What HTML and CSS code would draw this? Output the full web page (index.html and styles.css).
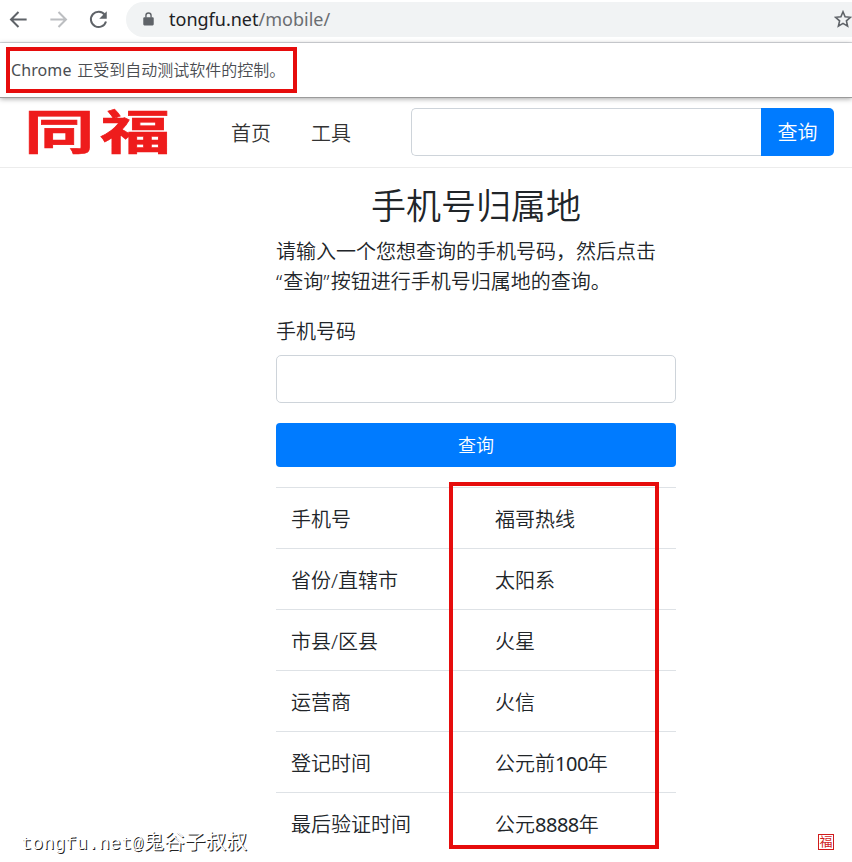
FILE: index.html
```html
<!DOCTYPE html>
<html lang="zh-CN">
  <head>
    <meta charset="UTF-8" />
    <meta name="viewport" content="width=device-width, initial-scale=1.0" />
    <title>手机号归属地</title>
    <link rel="stylesheet" href="styles.css">
  </head>
  <body>
    <div class="toolbar">
      <svg class="icon" viewBox="0 0 24 24"><path d="M20.5 12H4.8M12 4.2L4.2 12l7.8 7.8" /></svg>
      <svg class="icon off" viewBox="0 0 24 24"><path d="M3.5 12h15.7M12 4.2l7.8 7.8-7.8 7.8" /></svg>
      <svg class="icon" viewBox="0 0 24 24"><path d="M18.6 7.2A8 8 0 1 0 19.8 14" /><path class="fill" d="M20.6 3.4v7.8h-7.8z" /></svg>
      <div class="address">
        <svg class="lock" viewBox="0 0 12 15"><path d="M1.5 5.500h9a1.200 1.200 0 0 1 1.200 1.200v6.600a1.200 1.200 0 0 1-1.200 1.200h-9A1.200 1.200 0 0 1 .3 13.300V6.700A1.200 1.200 0 0 1 1.500 5.500z" /><path class="shackle" d="M3.200 6V3.800a2.800 2.800 0 0 1 5.600 0V6" /></svg>
        <span class="url">tongfu.net<span>/mobile/</span></span>
        <svg class="star" viewBox="0 0 18 18"><path d="M9 1.800l2.100 5 5.300.5-4 3.600 1.200 5.300L9 13.400l-4.600 2.800 1.200-5.300-4-3.600 5.300-.5z" /></svg>
      </div>
    </div>

    <div class="infobar">
      <p><span class="chrome">Chrome</span> 正受到自动测试软件的控制。</p>
      <div class="mark mark_info"></div>
    </div>

    <div class="navbar">
      <div class="logo"><span>同</span><span>福</span></div>
      <div class="links">
        <a>首页</a>
        <a>工具</a>
      </div>
      <div class="search">
        <input type="text" />
        <button>查询</button>
      </div>
    </div>

    <div class="container">
      <h1>手机号归属地</h1>
      <p class="intro">请输入一个您想查询的手机号码，然后点击<br /><span class="quote">“</span>查询<span class="quote">”</span>按钮进行手机号归属地的查询。</p>
      <label for="mobile">手机号码</label>
      <input type="text" id="mobile" />
      <button class="submit">查询</button>
      <div class="result">
        <table>
          <tr><td>手机号</td><td>福哥热线</td></tr>
          <tr><td>省份/直辖市</td><td>太阳系</td></tr>
          <tr><td>市县/区县</td><td>火星</td></tr>
          <tr><td>运营商</td><td>火信</td></tr>
          <tr><td>登记时间</td><td>公元前<span class="num">100</span>年</td></tr>
          <tr><td>最后验证时间</td><td>公元<span class="num">8888</span>年</td></tr>
        </table>
        <div class="mark mark_result"></div>
      </div>
    </div>

    <div class="watermark"><span>tongfu.net@</span>鬼谷子叔叔</div>
    <div class="stamp">福</div>
  </body>
</html>
```

FILE: styles.css
```css
* {
  padding: 0;
  margin: 0;
  box-sizing: border-box;
}

body {
  position: relative;
  width: 100%;
  height: 862px;
  overflow: hidden;
  background-color: #fff;
  color: #212529;
  font-family: "Noto Sans", "Noto Sans CJK SC", sans-serif;
  font-size: 20px;
  font-weight: 350;
  line-height: 30px;
}
input,
button {
  font-family: inherit;
  font-weight: inherit;
  outline: none;
}

/* browser bar */
.toolbar {
  display: flex;
  align-items: center;
  height: 43px;
  padding: 0 0 4px 7px;
  border-bottom: 1px solid #dadce0;
}
.icon {
  flex: none;
  width: 23px;
  height: 23px;
  margin-right: 17px;
  fill: none;
  stroke: #5f6368;
  stroke-width: 2.1;
}
.off {
  stroke: #bcbec1;
}
.icon .fill {
  fill: #5f6368;
  stroke: none;
}
.address {
  display: flex;
  align-items: center;
  flex: none;
  width: 760px;
  height: 35px;
  margin-left: -1px;
  padding-left: 17px;
  border-radius: 18px;
  background-color: #f1f3f4;
}
.lock {
  width: 11px;
  height: 14px;
  fill: #5f6368;
}
.lock .shackle {
  fill: none;
  stroke: #5f6368;
  stroke-width: 1.5;
}
.url {
  width: 665px;
  margin-left: 15px;
  color: #202124;
  font-size: 18px;
  font-weight: 400;
}
.url span {
  color: #6a6d71;
}
.star {
  width: 18px;
  height: 18px;
  fill: none;
  stroke: #5f6368;
  stroke-width: 1.6;
}

.infobar {
  position: relative;
  z-index: 1;
  height: 55px;
  padding: 12px 11px;
  border-bottom: 1px solid #9b9b9b;
  background-color: #fff;
  box-shadow: 0 1px 5px rgb(0, 0, 0, 0.35);
  color: #4a4d51;
  font-size: 16px;
}
.chrome {
  display: inline-block;
  width: 62px;
  font-weight: 400;
  letter-spacing: .1px;
}

/* red frames over the page */
.mark {
  position: absolute;
  border: 4px solid #e60c0c;
}
.mark_info {
  top: 4px;
  left: 6px;
  width: 291px;
  height: 46px;
}
.mark_result {
  top: -5px;
  left: 173px;
  width: 210px;
  height: 367px;
}

.navbar {
  display: flex;
  align-items: center;
  height: 70px;
  padding: 0 18px 2px 24px;
  border-bottom: 1px solid #ececec;
}
.logo {
  display: flex;
  width: 207px;
  padding-bottom: 2px;
  color: #ee1c1c;
  font-size: 47px;
  font-weight: 700;
  line-height: 48px;
  -webkit-text-stroke: .6px #ee1c1c;
}
.logo span {
  width: 47px;
  margin-right: 29px;
  transform: scaleX(1.5);
  transform-origin: 0 50%;
}
.links {
  display: flex;
  gap: 40px;
  width: 180px;
  padding-top: 4px;
  color: #333;
}
.search {
  display: flex;
  flex: 1;
}
.search input {
  flex: 1;
  min-width: 0;
  height: 48px;
  border: 1px solid #ced4da;
  border-right: none;
  border-radius: 5px 0 0 5px;
}
.search button {
  width: 73px;
  height: 48px;
  border: none;
  border-radius: 0 5px 5px 0;
  background-color: #007bff;
  color: #fff;
  font-size: 20px;
}

.container {
  width: 400px;
  margin: 17px 0 0 276px;
}
.container h1 {
  margin-bottom: 10px;
  font-size: 35px;
  font-weight: 350;
  line-height: 42px;
  text-align: center;
}
.intro {
  margin-bottom: 20px;
  white-space: nowrap;
}
.quote {
  letter-spacing: 1.1px;
}
.container label {
  display: block;
  margin-bottom: 8px;
}
.container input {
  display: block;
  width: 100%;
  height: 48px;
  margin-bottom: 20px;
  border: 1px solid #ced4da;
  border-radius: 5px;
}
.submit {
  display: block;
  width: 100%;
  height: 44px;
  margin-bottom: 20px;
  padding-bottom: 2px;
  border: none;
  border-radius: 4px;
  background-color: #007bff;
  color: #fff;
  font-size: 18px;
}
.result {
  position: relative;
}
.result table {
  width: 100%;
  border-spacing: 0;
  table-layout: fixed;
}
.result td {
  height: 61px;
  padding: 17px 15px 13px;
  border-top: 1px solid #dee2e6;
}
.result td:first-child {
  width: 204px;
}
.num {
  font-weight: 400;
  letter-spacing: -.5px;
}

.watermark {
  position: absolute;
  left: 21px;
  bottom: 2px;
  color: #fff;
  font-family: "Liberation Mono", "Noto Sans CJK SC", monospace;
  font-size: 20.800px;
  font-weight: 400;
  text-shadow: 1px 1px 0 #222;
}
.watermark span {
  font-size: 18.500px;
}
.stamp {
  position: absolute;
  left: 818px;
  top: 834px;
  width: 16px;
  height: 16px;
  border: 1px solid #d01c1c;
  color: #d01c1c;
  font-size: 13px;
  font-weight: 400;
  line-height: 13px;
  text-align: center;
}
```
